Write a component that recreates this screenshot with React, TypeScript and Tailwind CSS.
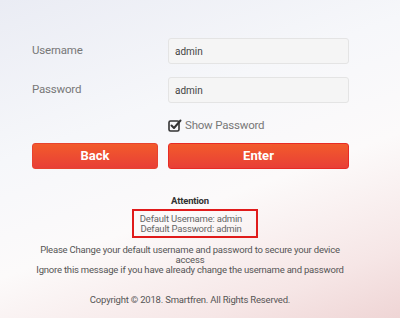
import { useState } from 'react';

export default function App() {
  const [showPassword, setShowPassword] = useState(true);

  return (
    <div className="h-[318px] w-[400px] overflow-hidden bg-[linear-gradient(160deg,#eaecf4_0%,#f6f7fa_35%,#fcfafa_60%,#f6e6e6_85%,#efd5d5_100%)] font-['Roboto',sans-serif] text-[#666]">
      <div className="ml-[32px] w-[317px] pt-[38px]">
        <div className="grid grid-cols-[136px_181px] gap-y-[13px]">
          <label className="flex items-center text-[11.5px] tracking-[-0.2px] text-[#777]">Username</label>
          <input
            type="text"
            defaultValue="admin"
            className="h-[26px] rounded-[3px] border border-[#e4e4e4] bg-[#f5f5f5] px-[6px] text-[10px] text-[#444] outline-none"
          />
          <label className="flex items-center text-[11.5px] tracking-[-0.2px] text-[#777]">Password</label>
          <input
            type={showPassword ? 'text' : 'password'}
            defaultValue="admin"
            className="h-[26px] rounded-[3px] border border-[#e4e4e4] bg-[#f5f5f5] px-[6px] text-[10px] text-[#444] outline-none"
          />
        </div>

        <label className="ml-[136px] mt-[15px] flex h-[16px] cursor-pointer items-center gap-[4px] text-[11.5px] tracking-[-0.2px] text-[#777]">
          <span
            onClick={() => setShowPassword(!showPassword)}
            className="relative h-[12px] w-[13px]"
          >
            <svg width="14" height="13" viewBox="0 0 14 13" className="absolute -top-[1px] left-0">
              <rect x="1" y="2" width="10" height="10" rx="1.5" fill="none" stroke="#333" strokeWidth="1.6" />
              {showPassword && (
                <path d="M3.5 6.5 L6 9 L12.5 1.5" fill="none" stroke="#333" strokeWidth="2" strokeLinecap="round" strokeLinejoin="round" />
              )}
            </svg>
          </span>
          Show Password
        </label>

        <div className="mt-[9px] flex gap-[10px]">
          <button className="h-[26px] w-[126px] rounded-[3px] border border-[#e8432f] bg-[linear-gradient(#f25b2b,#e83f37)] text-[13px] font-bold text-white">
            Back
          </button>
          <button className="h-[26px] w-[181px] rounded-[3px] border border-[#e82b25] bg-[linear-gradient(#f25b2b,#e83f37)] text-[13px] font-bold text-white">
            Enter
          </button>
        </div>
      </div>

      <div className="mt-[27px] flex flex-col items-center pr-[20px] text-center text-[9.5px] leading-[10px] tracking-[-0.2px] text-[#555]">
        <div className="font-bold text-[#333]">Attention</div>
        <div className="ml-[10px] mt-[3px] flex h-[29px] w-[126px] flex-col items-center justify-center border-2 border-[#e01b1b] pr-[8px] text-[#666]">
          <span>Default Username: admin</span>
          <span>Default Password: admin</span>
        </div>
        <p className="mt-[7px] w-[300px] text-[#555]">
          Please Change your default username and password to secure your device access
        </p>
        <p className="text-[#555]">
          Ignore this message if you have already change the username and password
        </p>
        <p className="mt-[20px] text-[#555]">Copyright © 2018. Smartfren. All Rights Reserved.</p>
      </div>
    </div>
  );
}
